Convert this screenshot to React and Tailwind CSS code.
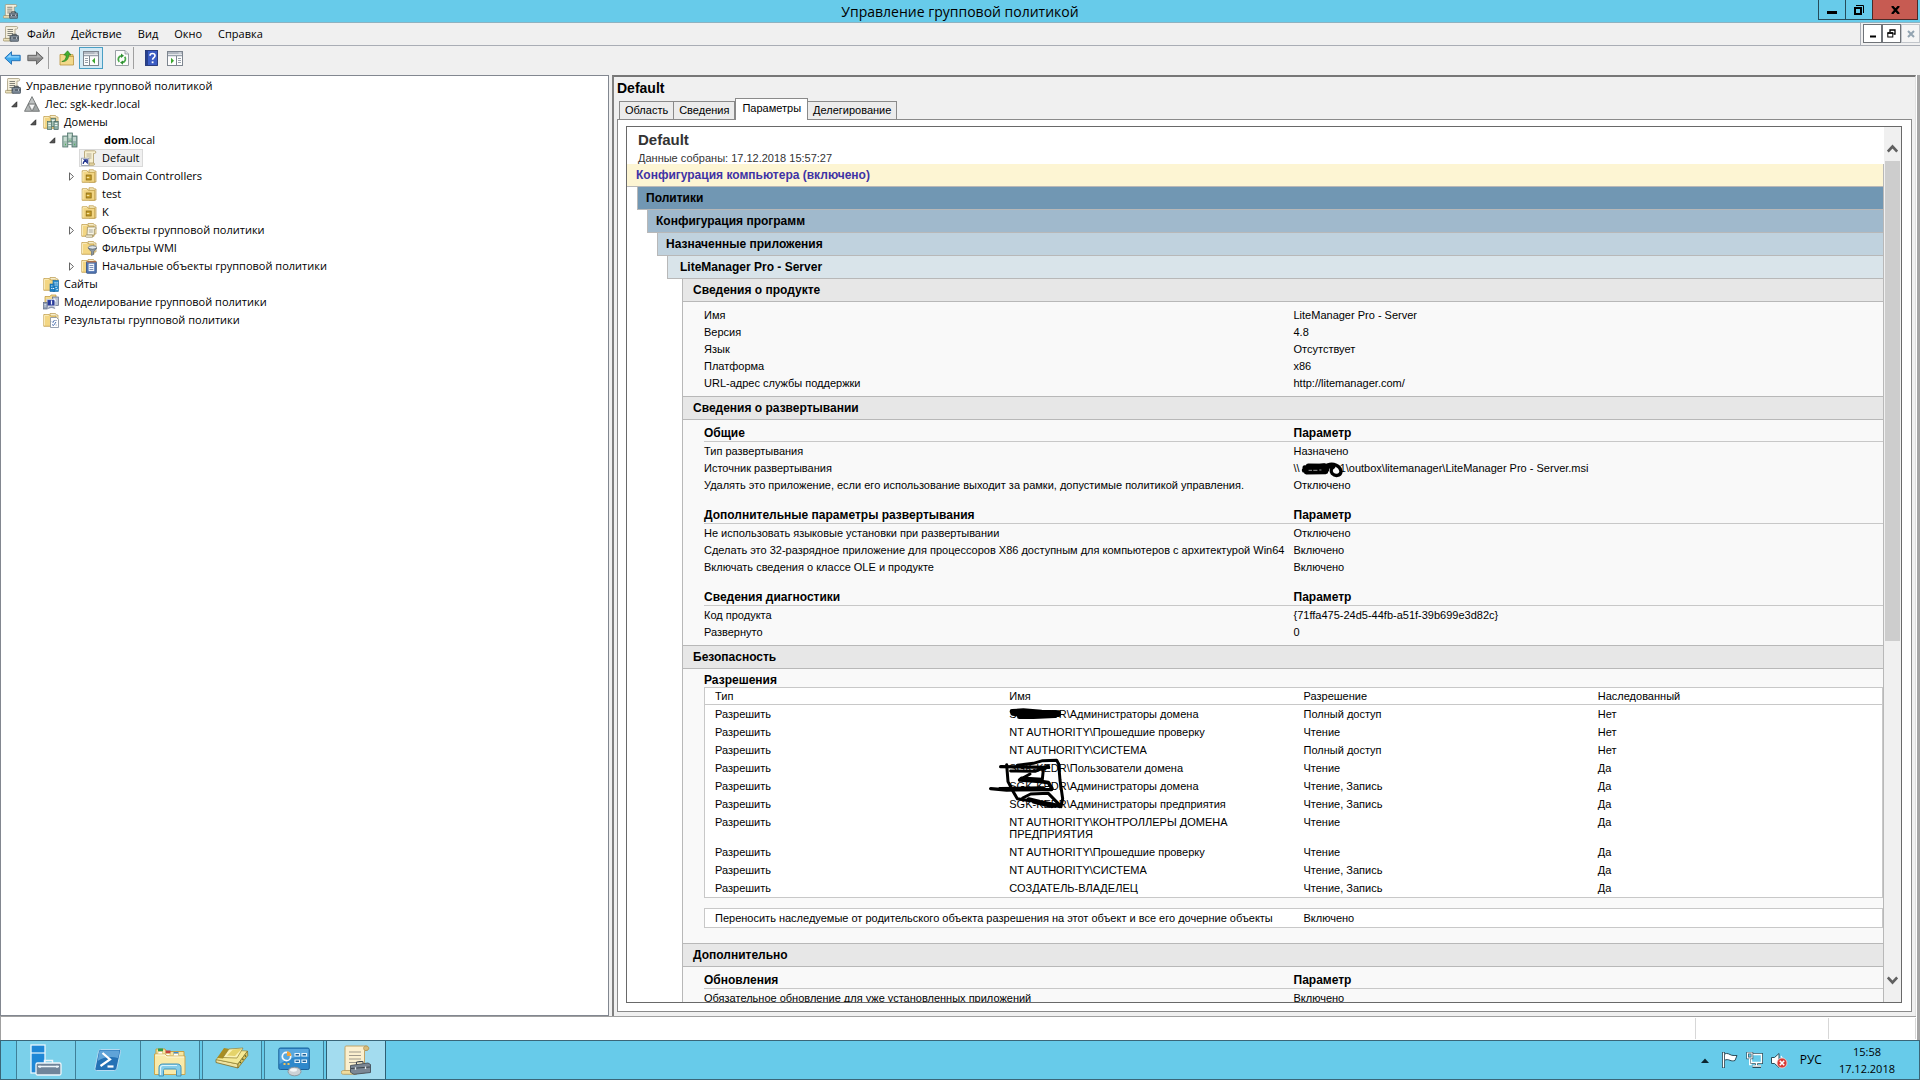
import { Fragment } from 'react';

/* ---------- icons ---------- */

function GpmcIcon({ size = 16 }) {
  return (
    <svg width={size} height={size} viewBox="0 0 16 16" className="shrink-0">
      <path d="M3 .5h10.500c1.600 0 1.600 2.600 0 2.600H12V13H2.500V2.500C2.500 1.200 2.600.5 3 .5z" fill="#f4efdc" stroke="#9c9070" strokeWidth=".7" />
      <path d="M1.200 15c-1.600 0-1.400-2.600 0-2.600H9V15z" fill="#ece2bd" stroke="#94875c" strokeWidth=".7" />
      <path d="M4.500 3.500h5.500M4.500 5.500h5.500M4.500 7.500h5.500M4.500 9.500h3" stroke="#77776f" strokeWidth=".9" />
      <rect x="7" y="9.500" width="8.600" height="5.800" rx=".7" fill="#7d8a97" stroke="#434e58" strokeWidth=".8" />
      <path d="M9.300 9.500V8.300h4v1.200M7 12h8.600" stroke="#333d46" strokeWidth=".9" fill="none" />
      <path d="M9 11.300v1.500M13.500 11.300v1.500" stroke="#e4e9ee" strokeWidth=".9" />
    </svg>
  );
}

function ForestIcon() {
  return (
    <svg width="16" height="16" viewBox="0 0 16 16" className="shrink-0">
      <path d="M8 .6 4.200 8h7.600z" fill="#bfc2c2" stroke="#646868" strokeWidth=".8" />
      <path d="M4.200 8 .5 15.300h7.300z" fill="#b2b6b6" stroke="#646868" strokeWidth=".8" />
      <path d="M11.800 8 8.200 15.300h7.300z" fill="#9fa4a4" stroke="#646868" strokeWidth=".8" />
      <path d="M4.800 8.400h6.400L8 14.600z" fill="#f6f7f7" stroke="#7e8282" strokeWidth=".6" />
    </svg>
  );
}

function FolderBase() {
  return (
    <>
      <path d="M7 1.500h5.500l1 1.500H15v9H7z" fill="#f7eecb" stroke="#b9984a" strokeWidth=".7" />
      <path d="M.8 2.500h5.500L7.600 4H13v10.300H.8z" fill="#f3d683" stroke="#b9923a" strokeWidth=".7" />
      <path d="M1.500 3.300h4.300M1.500 3.300v10.200" stroke="#fdf3cd" strokeWidth=".8" fill="none" />
    </>
  );
}

function Servers({ x = 0, y = 0 }) {
  return (
    <g>
      <rect x={x + 3.500} y={y} width="4.500" height="8" fill="#a9c6b8" stroke="#4a6d66" strokeWidth=".7" />
      <rect x={x} y={y + 3} width="4.200" height="8" fill="#9dbcae" stroke="#4a6d66" strokeWidth=".7" />
      <rect x={x + 6.500} y={y + 3} width="4.200" height="8" fill="#8fb1a8" stroke="#42625d" strokeWidth=".7" />
      <path d={`M${x + 4.500} ${y + 2}h2.500M${x + 0.800} ${y + 5}h2.600M${x + 0.800} ${y + 7}h2.600M${x + 7.300} ${y + 5}h2.600M${x + 7.300} ${y + 7}h2.600`} stroke="#f1f7f4" strokeWidth=".9" />
    </g>
  );
}

function DomainsIcon() {
  return (
    <svg width="16" height="16" viewBox="0 0 16 16" className="shrink-0">
      <FolderBase />
      <Servers x={4.500} y={4.500} />
    </svg>
  );
}

function DomainIcon() {
  return (
    <svg width="16" height="16" viewBox="0 0 16 16" className="shrink-0">
      <rect x="5.500" y="1" width="5" height="9" fill="#a9c6b8" stroke="#54766f" strokeWidth=".8" />
      <rect x=".8" y="4" width="5" height="11" fill="#a3c1b3" stroke="#54766f" strokeWidth=".8" />
      <rect x="10" y="4" width="5" height="11" fill="#93b3aa" stroke="#4b6b66" strokeWidth=".8" />
      <path d="M6.500 3h3M6.500 5h3M1.800 6h3M1.800 8h3M11 6h3M11 8h3" stroke="#eff6f2" />
      <path d="M3 12.500h.8M12.300 12.500h.8M7.600 8.500h.8" stroke="#3faa48" strokeWidth="1.300" />
      <path d="M6 12.500h4" stroke="#7b9b94" strokeWidth="1.200" />
    </svg>
  );
}

function GpoLinkIcon() {
  return (
    <svg width="16" height="16" viewBox="0 0 16 16" className="shrink-0">
      <path d="M4 .8h9.500c1.800 0 1.800 2.700 0 2.700h-1V13.500H3.500V3C3.500 1.500 3.400.8 4 .8z" fill="#f7efd0" stroke="#ad9a68" strokeWidth=".8" />
      <path d="M8 15.300h4.500c1.400 0 1.400-2.300 0-2.300H8z" fill="#eadba6" stroke="#a08d58" strokeWidth=".7" />
      <path d="M5.500 4h5M5.500 6h5M8 8h2.500" stroke="#a39d88" strokeWidth=".8" />
      <rect x=".6" y="8.200" width="7.200" height="7.200" fill="#fff" stroke="#8b93a6" strokeWidth=".8" />
      <path d="M2.200 13.900c0-2 .9-2.800 2.500-2.800M3.300 9.900h3v3z" stroke="#1d2f8c" strokeWidth="1.100" fill="#1d2f8c" fillOpacity=".4" />
    </svg>
  );
}

function OuIcon() {
  return (
    <svg width="16" height="16" viewBox="0 0 16 16" className="shrink-0">
      <path d="M8 1.800h4.500l.8 1.200H15v11H8z" fill="#f8ecc0" stroke="#b9923a" strokeWidth=".7" />
      <path d="M1.200 2.800h5L7.400 4.300H13.800v10H1.200z" fill="#f2d583" stroke="#b9953f" strokeWidth=".8" />
      <path d="M1.900 3.600h4M1.900 3.600v10" stroke="#fdf2c6" strokeWidth=".8" />
      <rect x="5.200" y="7" width="5" height="5" fill="#c39a26" stroke="#8a6b14" strokeWidth=".8" />
      <path d="M5.800 9.500h2.500" stroke="#f7e39c" strokeWidth="1.200" />
    </svg>
  );
}

function GpoFolderIcon() {
  return (
    <svg width="16" height="16" viewBox="0 0 16 16" className="shrink-0">
      <FolderBase />
      <path d="M6.500 5h7.500c1.500 0 1.500 2.200 0 2.200h-.7V13H6z" fill="#fbf7e6" stroke="#9c8f68" strokeWidth=".8" />
      <path d="M5.500 15.300c-1.300 0-1.300-2.300 0-2.300h6v2.300z" fill="#f2ead0" stroke="#9c8f68" strokeWidth=".7" />
      <path d="M7.800 8h4M7.800 10h4" stroke="#9a9a92" strokeWidth=".9" />
    </svg>
  );
}

function WmiIcon() {
  return (
    <svg width="16" height="16" viewBox="0 0 16 16" className="shrink-0">
      <FolderBase />
      <ellipse cx="11.500" cy="7.500" rx="4.200" ry="1.800" fill="#dfe6ec" stroke="#66727d" strokeWidth=".8" />
      <path d="M7.300 8c.6 2 2.900 2.800 3.200 3.700v3.800l2-1.200v-2.600c.3-.9 2.600-1.700 3.200-3.700-1.500 1.700-6.900 1.700-8.400 0z" fill="#8b98a5" stroke="#56626e" strokeWidth=".6" />
    </svg>
  );
}

function StarterIcon() {
  return (
    <svg width="16" height="16" viewBox="0 0 16 16" className="shrink-0">
      <FolderBase />
      <rect x="5.500" y="3.500" width="9.800" height="11.800" rx=".8" fill="#5377b4" stroke="#2f4c82" strokeWidth=".8" />
      <rect x="7.600" y="5.700" width="5.600" height="7.400" fill="#f0f4fa" />
      <path d="M6 3.800h9" stroke="#c8743a" strokeWidth="1.200" />
      <path d="M8.500 7.500h3.800M8.500 9.500h3.800M8.500 11.500h3.800" stroke="#6f86ae" strokeWidth=".9" />
    </svg>
  );
}

function SitesIcon() {
  return (
    <svg width="16" height="16" viewBox="0 0 16 16" className="shrink-0">
      <FolderBase />
      <rect x="10" y="4.500" width="5.500" height="11" fill="#2c8fd0" stroke="#17669e" strokeWidth=".6" />
      <rect x="7" y="8" width="4.800" height="7.500" fill="#1f7fc2" stroke="#17669e" strokeWidth=".6" />
      <path d="M11.500 6.800h1.200M13.500 6.800h1.200M11.500 9h1.200M13.500 9h1.200M8.200 10h1.200M12.500 11.500h1.200M8.200 12.500h1.200M10 12.500h1.200M13.500 13.500h1.200" stroke="#e6f4fd" strokeWidth="1.200" />
    </svg>
  );
}

function ModelingIcon() {
  return (
    <svg width="16" height="16" viewBox="0 0 16 16" className="shrink-0">
      <path d="M2 2.500h5L8 1h5v8H2z" fill="#f5dc90" stroke="#b9923a" strokeWidth=".7" />
      <rect x="9.500" y="3" width="6" height="8.500" fill="#b9c3d4" stroke="#5d6984" strokeWidth=".7" />
      <rect x="4" y="5.500" width="8" height="6.500" fill="#2a3c9c" stroke="#c5cbdb" strokeWidth="1.100" />
      <path d="M8.500 6.500v4M11 4.500l2 3" stroke="#eef1ff" strokeWidth="1.200" />
      <rect x=".6" y="8.500" width="3.600" height="6.500" fill="#93a2b8" stroke="#5d6984" strokeWidth=".7" />
      <path d="M5 14.500c2-1.500 5-1.500 7 0" stroke="#8d97ad" strokeWidth="1.500" fill="none" />
      <path d="M1.300 10.500h2M1.300 12h2" stroke="#edf2f8" strokeWidth=".7" />
    </svg>
  );
}

function ResultsIcon() {
  return (
    <svg width="16" height="16" viewBox="0 0 16 16" className="shrink-0">
      <FolderBase />
      <path d="M7.500 5.500h6l2 2v8h-8z" fill="#fff" stroke="#7f8ba0" strokeWidth=".8" />
      <path d="M9 9.500l1 1 1.500-2.500M9 12.500l1.500 1 2.500-3.500" stroke="#3a62a8" strokeWidth=".9" fill="none" />
      <path d="M12 8.500h2M12.500 13h1.500" stroke="#9aa5b5" strokeWidth=".8" />
    </svg>
  );
}

function ArrowLeftIcon() {
  return (
    <svg width="17" height="16" viewBox="0 0 17 16">
      <path d="M.8 8 7.500 1.700v3.600h8.700v5.400H7.500v3.600z" fill="#3fa9ec" stroke="#1f6cb3" strokeWidth=".9" />
      <path d="M2.800 7.500 6.800 3.700v2.500h8.400v1.300z" fill="#93d3fa" />
    </svg>
  );
}

function ArrowRightIcon() {
  return (
    <svg width="17" height="16" viewBox="0 0 17 16">
      <path d="M16.200 8 9.500 1.700v3.600H.8v5.400h8.700v3.600z" fill="#8b8b8b" stroke="#5e5e5e" strokeWidth=".9" />
      <path d="M14.200 7.500 10.200 3.700v2.500H1.800v1.300z" fill="#b3b3b3" />
    </svg>
  );
}

function FolderUpIcon() {
  return (
    <svg width="16" height="16" viewBox="0 0 16 16">
      <path d="M1 4.500h4.500L7 6h7.500v9H1z" fill="#f3d98b" stroke="#b9923a" strokeWidth=".8" />
      <path d="M10 4.500h4v2h-4z" fill="#e9c96d" stroke="#b9923a" strokeWidth=".6" />
      <path d="M2.800 11.500C5.800 10.800 7.200 8.500 7.200 5H4.800L8.600.8 12 5H9.700c0 4.300-2.700 7-6.900 6.500z" fill="#43ae2f" stroke="#25781a" strokeWidth=".6" />
    </svg>
  );
}

function TreeToggleIcon({ flip }) {
  return (
    <svg width="16" height="15" viewBox="0 0 16 15">
      <rect x=".5" y=".5" width="15" height="14" fill="#fdfdfd" stroke="#7d858f" />
      <path d="M1 2h14M1 4.500h14" stroke="#9aa3ae" strokeWidth="1.400" />
      <path d="M11.500 2h2.500" stroke="#e9edf2" strokeWidth=".9" />
      {flip ? (
        <>
          <path d="M9.500 5v9" stroke="#7d858f" />
          <path d="M11 7.500h3M11 9.500h3M11 11.500h3" stroke="#8c96a3" strokeWidth=".9" />
          <path d="M4 6.800v6L7 9.800z" fill="#3aa62e" />
        </>
      ) : (
        <>
          <path d="M6.500 5v9" stroke="#7d858f" />
          <path d="M2 7.500h3M2 9.500h3M2 11.500h3" stroke="#8c96a3" strokeWidth=".9" />
          <path d="M12 6.800v6L9 9.800z" fill="#3aa62e" />
        </>
      )}
    </svg>
  );
}

function RefreshIcon() {
  return (
    <svg width="14" height="16" viewBox="0 0 14 16">
      <path d="M.5.5h9.500l3.500 3.500v11.500H.5z" fill="#fcfcfc" stroke="#8f959c" strokeWidth=".9" />
      <path d="M10 .5V4h3.500" fill="#dfe3e8" stroke="#8f959c" strokeWidth=".8" />
      <path d="M4.300 11.800A3.500 3.500 0 0 1 6.500 5.800" fill="none" stroke="#45a845" strokeWidth="1.800" />
      <path d="M9.700 6.800A3.500 3.500 0 0 1 7.500 12.500" fill="none" stroke="#45a845" strokeWidth="1.800" />
      <path d="M6 3.600v4.300l3-2.200z" fill="#2f8f33" />
      <path d="M8 10.400v4.300l-3-2.200z" fill="#2f8f33" />
    </svg>
  );
}

function HelpIcon() {
  return (
    <svg width="13" height="16" viewBox="0 0 13 16">
      <rect x=".5" y=".5" width="12" height="15" fill="#3b5cc4" stroke="#1f3274" strokeWidth=".9" />
      <path d="M1 1h2v14H1z" fill="#27418f" />
      <path d="M5 5.700C5 2.800 10 2.800 10 5.700c0 2-2.400 1.900-2.400 4.100" fill="none" stroke="#fff" strokeWidth="1.600" />
      <rect x="6.700" y="11.400" width="1.800" height="1.800" fill="#fff" />
    </svg>
  );
}

function ServerManagerIcon() {
  return (
    <svg width="32" height="32" viewBox="0 0 32 32">
      <rect x="1" y="1" width="14" height="28" fill="#1f87d6" stroke="#e9f6fd" strokeWidth="1.300" />
      <path d="M1 9h14" stroke="#e9f6fd" strokeWidth="1.200" />
      <rect x="6" y="19" width="25" height="12" rx="1.500" fill="#70859a" stroke="#eef6fb" strokeWidth="1.300" />
      <path d="M14.500 19v-2.500h8V19" fill="none" stroke="#eef6fb" strokeWidth="1.400" />
      <path d="M8 22.500h21M10 21.500v2.500M27 21.500v2.500" stroke="#eef6fb" strokeWidth="1.300" />
    </svg>
  );
}

function PowerShellIcon() {
  return (
    <svg width="28" height="24" viewBox="0 0 28 24">
      <path d="M6.500 1.500h18.500c1.300 0 1.800.9 1.500 2.200l-3.600 16.500c-.3 1.300-1.300 2.300-2.600 2.300H2.500c-1.300 0-1.800-.9-1.500-2.200L4.400 3.700C4.700 2.400 5.300 1.500 6.500 1.500z" fill="#2471b5" stroke="#b5dbf2" />
      <path d="M6.500 2.500h18c1 0 1 .7.900 1.400L24 10C17 8 9 9 3.700 13L5.200 4c.2-.9.500-1.500 1.300-1.500z" fill="#5fa3d8" />
      <path d="M8.500 5l7.500 6.500L6.500 18" fill="none" stroke="#fff" strokeWidth="2.200" />
      <path d="M13.500 18.500h6" stroke="#fff" strokeWidth="2.200" />
    </svg>
  );
}

function ExplorerIcon() {
  return (
    <svg width="34" height="30" viewBox="0 0 34 30">
      <path d="M3 2h9l1.500 2.500H31V27H3z" fill="#f6e6a0" stroke="#c49f45" />
      <path d="M5 1.500h5v3H5z" fill="#2f9c46" />
      <path d="M12.500 3.500h5v3h-5z" fill="#c5443a" />
      <path d="M20.500 5h5v3h-5z" fill="#3b8bd0" />
      <path d="M1.500 7h11l1.500 2h18v18.500H1.500z" fill="#f9eaa9" stroke="#c9a650" />
      <path d="M5 6.500V4.500h4.500v2M13 8V6.500h4V8M20.500 8.500v-2h5v2" fill="#fff" stroke="#c9a650" strokeWidth=".5" />
      <path d="M2.500 8h9.500l1.500 2H31" stroke="#fffbe2" fill="none" />
      <path d="M6 29V20.500c0-2 1.500-3.500 3.500-3.500h15c2 0 3.500 1.500 3.500 3.500V29h-4.500v-5.500c0-1-.5-1.500-1.500-1.500H12c-1 0-1.500.5-1.500 1.500V29z" fill="#86cde9" stroke="#4593b8" />
      <path d="M7.500 28v-7c0-1.500 1-2.500 2.500-2.500h14" stroke="#dcf3fb" strokeWidth="1.200" fill="none" />
    </svg>
  );
}

function ManagerIcon() {
  return (
    <svg width="34" height="22" viewBox="0 0 34 22">
      <path d="M1 12.500 23 17v4L1 15.500z" fill="#efe3a0" stroke="#7c6a22" strokeWidth=".8" />
      <path d="M1 12.500 11 3l21.500 1L23 17z" fill="#f4e996" stroke="#9a8634" strokeWidth=".7" />
      <path d="M2 11 9 1l6 1-7 9.500z" fill="#a88d22" />
      <path d="M8 10.500 14 2l14-1-6 10z" fill="#faf2b4" stroke="#8f7c2e" strokeWidth=".7" />
      <path d="M12 8.500 18 2.500l9-.8L20 9z" fill="#e5d36a" />
      <path d="M23 17v4L32.800 8.500 32.500 4z" fill="#d9c560" stroke="#7c6a22" strokeWidth=".7" />
      <path d="M25 16l.8-1M27.500 12.800l.8-1M30 9.500l.8-1" stroke="#4b5b2a" strokeWidth="1.500" />
    </svg>
  );
}

function ControlPanelIcon() {
  return (
    <svg width="32" height="30" viewBox="0 0 32 30">
      <rect x=".8" y="1" width="30.500" height="21.500" rx="1.500" fill="#2e88cb" stroke="#1b629b" />
      <path d="M1.500 2h29v8C20 8 10 11 1.500 17z" fill="#58a8df" />
      <circle cx="8.500" cy="9.500" r="4.200" fill="none" stroke="#f3f9fd" strokeWidth="1.700" />
      <path d="M9 9V4.300a4.800 4.800 0 0 1 4.300 4.700z" fill="#f1a33c" />
      <path d="M17 6.500h4.500v2.500H17zM24 6.500h4.500v2.500H24zM17 13h4.500v2.500H17zM24 13h4.500v2.500H24z" fill="#1c5f98" stroke="#e4f3fc" strokeWidth="1.100" />
      <path d="M5.500 17h2M9.500 17h2" stroke="#f4c257" strokeWidth="2" />
      <ellipse cx="16.500" cy="24.500" rx="6.500" ry="4.300" fill="#cdd2d6" stroke="#8c9297" strokeWidth=".9" />
      <ellipse cx="15.500" cy="23" rx="3.500" ry="1.700" fill="#f4f6f7" />
    </svg>
  );
}

function GpmcLargeIcon() {
  return (
    <svg width="30" height="30" viewBox="0 0 30 30">
      <path d="M5 1h20c3.500 0 3.500 4.500 0 4.500h-1.500V28H4V4C4 2 4 1 5 1z" fill="#fbf0cf" stroke="#bfa468" />
      <path d="M24 5.500c-2-1-2-4.500 1-4.500 3.800 0 3.600 4.500 0 4.500z" fill="#d8bd7c" stroke="#a98e50" strokeWidth=".7" />
      <path d="M2.500 29.300c-3 0-3-3.800 0-3.800h13v3.800z" fill="#f0dc9d" stroke="#b2975a" strokeWidth=".8" />
      <path d="M8 7h12M8 10.500h12M8 14h12M8 17.500h7" stroke="#a09a8c" strokeWidth="1.100" />
      <path d="M9.500 20.500 27 18l2.500 1.500v8L13 29.300l-3.500-2z" fill="#7b8794" stroke="#454f59" strokeWidth=".9" />
      <path d="M15.500 19.500v-2c0-1 6.500-1.500 6.500-.5v1.500M10 23.500l19-1.500" fill="none" stroke="#3c444c" strokeWidth="1.100" />
      <path d="M14.500 22.300v2.500M24.500 21.500v2.500" stroke="#e5eaee" strokeWidth="1.300" />
    </svg>
  );
}

/* ---------- data ---------- */

const tree = [
  { level: 0, icon: <GpmcIcon />, text: 'Управление групповой политикой' },
  { level: 1, state: 'open', icon: <ForestIcon />, text: 'Лес: sgk-kedr.local' },
  { level: 2, state: 'open', icon: <DomainsIcon />, text: 'Домены' },
  { level: 3, state: 'open', icon: <DomainIcon />, text: <span className="pl-[21px]"><b>dom</b>.local</span> },
  { level: 4, icon: <GpoLinkIcon />, text: 'Default', selected: true },
  { level: 4, state: 'closed', icon: <OuIcon />, text: 'Domain Controllers' },
  { level: 4, icon: <OuIcon />, text: 'test' },
  { level: 4, icon: <OuIcon />, text: 'K' },
  { level: 4, state: 'closed', icon: <GpoFolderIcon />, text: 'Объекты групповой политики' },
  { level: 4, icon: <WmiIcon />, text: 'Фильтры WMI' },
  { level: 4, state: 'closed', icon: <StarterIcon />, text: 'Начальные объекты групповой политики' },
  { level: 2, icon: <SitesIcon />, text: 'Сайты' },
  { level: 2, icon: <ModelingIcon />, text: 'Моделирование групповой политики' },
  { level: 2, icon: <ResultsIcon />, text: 'Результаты групповой политики' },
];

const indents = ['', '', 'pl-[19px]', 'pl-[38px]', 'pl-[57px]'];

const product = [
  ['Имя', 'LiteManager Pro - Server'],
  ['Версия', '4.8'],
  ['Язык', 'Отсутствует'],
  ['Платформа', 'x86'],
  ['URL-адрес службы поддержки', 'http://litemanager.com/'],
];

const deployment = [
  {
    title: 'Общие',
    rows: [
      ['Тип развертывания', 'Назначено'],
      ['Источник развертывания', <SourcePath key="p" />],
      ['Удалять это приложение, если его использование выходит за рамки, допустимые политикой управления.', 'Отключено'],
    ],
  },
  {
    title: 'Дополнительные параметры развертывания',
    rows: [
      ['Не использовать языковые установки при развертывании', 'Отключено'],
      ['Сделать это 32-разрядное приложение для процессоров X86 доступным для компьютеров с архитектурой Win64', 'Включено'],
      ['Включать сведения о классе OLE и продукте', 'Включено'],
    ],
  },
  {
    title: 'Сведения диагностики',
    rows: [
      ['Код продукта', '{71ffa475-24d5-44fb-a51f-39b699e3d82c}'],
      ['Развернуто', '0'],
    ],
  },
];

const permissions = [
  ['SGK-KEDR\\Администраторы домена', 'Полный доступ', 'Нет'],
  ['NT AUTHORITY\\Прошедшие проверку', 'Чтение', 'Нет'],
  ['NT AUTHORITY\\СИСТЕМА', 'Полный доступ', 'Нет'],
  ['SGK-KEDR\\Пользователи домена', 'Чтение', 'Да'],
  ['SGK-KEDR\\Администраторы домена', 'Чтение, Запись', 'Да'],
  ['SGK-KEDR\\Администраторы предприятия', 'Чтение, Запись', 'Да'],
  [<Fragment key="k">NT AUTHORITY\КОНТРОЛЛЕРЫ ДОМЕНА<br />ПРЕДПРИЯТИЯ</Fragment>, 'Чтение', 'Да'],
  ['NT AUTHORITY\\Прошедшие проверку', 'Чтение', 'Да'],
  ['NT AUTHORITY\\СИСТЕМА', 'Чтение, Запись', 'Да'],
  ['СОЗДАТЕЛЬ-ВЛАДЕЛЕЦ', 'Чтение, Запись', 'Да'],
];

/* ---------- pen marks over private names ---------- */

function SourcePath() {
  return (
    <span className="relative">
      {'\\\\'}
      <span className="inline-block w-[40px]" />
      {'1\\outbox\\litemanager\\LiteManager Pro - Server.msi'}
      <svg width="120" height="60" viewBox="0 0 360 180" className="pointer-events-none absolute -top-[21px] -left-[9px]" fill="none" stroke="#000" strokeLinecap="round" strokeLinejoin="round">
        <path d="M60 80 L118 74 M58 88 L125 86 M64 93 L122 92 M70 75 L140 76" strokeWidth="15" />
        <path d="M128 72 C145 66 166 74 168 92 C166 106 150 106 142 98 C136 90 138 82 146 78" strokeWidth="10" />
        <path d="M72 88h8M86 88h10M104 87h4" stroke="#ddd" strokeWidth="2" />
      </svg>
    </span>
  );
}

function NamesScribble() {
  return (
    <svg width="140" height="120" viewBox="0 0 420 360" className="pointer-events-none absolute -top-[5px] -left-[19px]" fill="none" stroke="#000" strokeLinecap="round" strokeLinejoin="round">
      <path d="M96 34 L130 32 L185 36 L236 38 M98 40 L140 46 L190 42 L236 44 M118 50 L160 50 L225 47" strokeWidth="14" />
      <path d="M62 200 L206 202" strokeWidth="10" />
      <path d="M92 213 L165 214 L205 198" strokeWidth="9" />
      <path d="M112 196 L160 190 L188 182 L230 181 L236 192 L240 240 L248 296 L243 320" strokeWidth="9" />
      <path d="M80 194 L84 245 L98 272 L112 296 L150 302" strokeWidth="9" />
      <path d="M205 200 L190 208 L187 238 L124 234 L118 240 L150 222" strokeWidth="9" />
      <path d="M120 240 L180 244 L205 248 L216 266" strokeWidth="11" />
      <path d="M32 266 L80 270 L214 269 M60 266 L190 264" strokeWidth="10" />
      <path d="M128 294 L152 282 L205 280 L240 316" strokeWidth="9" />
      <path d="M146 298 L180 306 L238 318 M160 304 L215 318" strokeWidth="13" />
    </svg>
  );
}

/* ---------- report parts ---------- */

function Section({ title, children }) {
  return (
    <section className="ml-[55px] border-x border-[#b8b8b8] bg-[#f9f9f9]">
      <h3 className="border-b border-[#b8b8b8] bg-[#e7e7e7] pl-[10px] text-xs leading-[22px] font-bold">{title}</h3>
      {children}
    </section>
  );
}

function PairTable({ title, rows }) {
  return (
    <table className="w-full table-fixed border-separate border-spacing-0">
      {title && (
        <thead>
          <tr>
            <th className="border-b border-[#c8c8c8] p-0 text-left text-xs leading-4 font-bold">{title}</th>
            <th className="border-b border-[#c8c8c8] p-0 text-left text-xs leading-4 font-bold">Параметр</th>
          </tr>
        </thead>
      )}
      <tbody>
        {rows.map(([a, b]) => (
          <tr key={a}>
            <td className="px-0 pt-px pb-0 leading-4 whitespace-nowrap">{a}</td>
            <td className="px-0 pt-px pb-0 leading-4 whitespace-nowrap">{b}</td>
          </tr>
        ))}
      </tbody>
    </table>
  );
}

function Report() {
  return (
    <div className="min-w-0 flex-1 overflow-hidden">
      <div className="pt-1 pl-[11px] text-[#333]">
        <h2 className="text-[15px] leading-[18px] font-bold">Default</h2>
        <p className="h-[15px] leading-[18px]">Данные собраны: 17.12.2018 15:57:27</p>
      </div>
      <div className="relative border-r border-b border-[#b8b8b8] bg-[#fdf5d3] pl-[9px] text-xs leading-[22px] font-bold text-[#3f33a5]">Конфигурация компьютера (включено)</div>
      <div className="ml-[10px] border-x border-b border-[#b8b8b8] bg-[#7197b3] pl-2 text-xs leading-[22px] font-bold">Политики</div>
      <div className="ml-[20px] border-x border-b border-[#b8b8b8] bg-[#a0b9cc] pl-2 text-xs leading-[22px] font-bold">Конфигурация программ</div>
      <div className="ml-[30px] border-x border-b border-[#b8b8b8] bg-[#c0d2de] pl-2 text-xs leading-[22px] font-bold">Назначенные приложения</div>
      <div className="ml-[40px] border-x border-b border-[#b8b8b8] bg-[#d9e4ea] pl-3 text-xs leading-[22px] font-bold">LiteManager Pro - Server</div>

      <Section title="Сведения о продукте">
        <div className="border-b border-[#b8b8b8] pt-1 pb-[5px] pl-[21px]">
          <PairTable rows={product} />
        </div>
      </Section>
      <Section title="Сведения о развертывании">
        <div className="flex flex-col gap-[14px] border-b border-[#b8b8b8] pt-[5px] pb-[5px] pl-[21px]">
          {deployment.map((g) => (
            <PairTable key={g.title} title={g.title} rows={g.rows} />
          ))}
        </div>
      </Section>
      <Section title="Безопасность">
        <div className="border-b border-[#b8b8b8] pt-1 pb-[15px] pl-[21px]">
          <h4 className="text-xs leading-[14px] font-bold">Разрешения</h4>
          <table className="w-full table-fixed border-separate border-spacing-0 border border-[#c8c8c8] bg-white">
            <thead>
              <tr>
                {['Тип', 'Имя', 'Разрешение', 'Наследованный'].map((h) => (
                  <th key={h} className="border-b border-[#c8c8c8] py-0 pr-0 pl-[10px] text-left leading-4 font-normal">{h}</th>
                ))}
              </tr>
            </thead>
            <tbody>
              {permissions.map(([name, right, inherited], i) => (
                <tr key={i}>
                  <td className="py-[3px] pr-0 pl-[10px] align-top leading-3">Разрешить</td>
                  <td className="relative py-[3px] pr-0 pl-[10px] align-top leading-3">
                    {name}
                    {i === 0 && <NamesScribble />}
                  </td>
                  <td className="py-[3px] pr-0 pl-[10px] align-top leading-3">{right}</td>
                  <td className="py-[3px] pr-0 pl-[10px] align-top leading-3">{inherited}</td>
                </tr>
              ))}
            </tbody>
          </table>
          <div className="mt-[10px] grid grid-cols-4 border border-[#c8c8c8] bg-white leading-[18px]">
            <span className="col-span-2 pl-[10px] whitespace-nowrap">Переносить наследуемые от родительского объекта разрешения на этот объект и все его дочерние объекты</span>
            <span className="pl-[10px]">Включено</span>
          </div>
        </div>
      </Section>
      <Section title="Дополнительно">
        <div className="pt-[5px] pl-[21px]">
          <PairTable title="Обновления" rows={[['Обязательное обновление для уже установленных приложений', 'Включено']]} />
        </div>
      </Section>
    </div>
  );
}

/* ---------- window ---------- */

function Tab({ active, children }) {
  return active ? (
    <button className="relative -mb-px h-[22px] border border-b-0 border-[#8a8a8a] bg-white px-[6px] pb-[3px]">{children}</button>
  ) : (
    <button className="-ml-px h-[18px] border border-b-0 border-[#8a8a8a] bg-[#ececec] px-[5px]">{children}</button>
  );
}

function TreeRow({ item }) {
  return (
    <li className={`flex h-[18px] items-center ${indents[item.level]}`}>
      {item.level > 0 && (
        <span className="flex h-full w-[19px] shrink-0 items-center pl-2">
          {item.state === 'open' && (
            <svg width="7" height="7" viewBox="0 0 7 7"><path d="M5.800.8v5H.8z" fill="#555" stroke="#222" strokeWidth=".8" /></svg>
          )}
          {item.state === 'closed' && (
            <svg width="7" height="9" viewBox="0 0 7 9"><path d="M1.500.8v7.400L5.500 4.500z" fill="#fff" stroke="#666" /></svg>
          )}
        </span>
      )}
      <button className={`flex h-[18px] items-center gap-[5px] border pr-[3px] pl-px whitespace-nowrap ${item.selected ? 'border-[#d9d9d9] bg-[#f0f0f0]' : 'border-transparent'}`}>
        {item.icon}
        <span>{item.text}</span>
      </button>
    </li>
  );
}

export default function App() {
  return (
    <div className="flex h-screen flex-col overflow-hidden bg-[#f0f0f0] font-['Open_Sans',sans-serif] text-[11px] text-black">
      <header className="grid h-[23px] shrink-0 grid-cols-[1fr_auto_1fr] items-start border-b border-[#8fb2c0] bg-[#67cbea]">
        <div className="pt-1 pl-[3px]"><GpmcIcon size={15} /></div>
        <h1 className="text-sm leading-[23px]">Управление групповой политикой</h1>
        <div className="flex justify-end pr-[2px]">
          <button aria-label="Свернуть" className="flex h-5 w-[28px] items-center justify-center border-x border-b border-[#264c5a]">
            <svg width="10" height="10" viewBox="0 0 10 10"><path d="M0 7.500h10" stroke="#000" strokeWidth="3" /></svg>
          </button>
          <button aria-label="Развернуть" className="flex h-5 w-[26px] items-center justify-center border-b border-[#264c5a]">
            <svg width="10" height="10" viewBox="0 0 10 10" fill="none" stroke="#000"><path d="M2 .5h7.500V8" /><rect x="1" y="3" width="6" height="6" strokeWidth="2" /></svg>
          </button>
          <button aria-label="Закрыть" className="flex h-5 w-[46px] items-center justify-center border-x border-b border-[#4b2a28] bg-[#c75b52]">
            <svg width="9" height="8" viewBox="0 0 9 8"><path d="M1 0l7 8M8 0 1 8" stroke="#000" strokeWidth="2.300" /></svg>
          </button>
        </div>
      </header>

      <nav className="flex h-[23px] shrink-0 border-b border-[#a9adb5]">
        <div className="flex items-center pr-px pl-[3px]"><GpmcIcon size={16} /></div>
        <div className="flex flex-1 items-center">
          {['Файл', 'Действие', 'Вид', 'Окно', 'Справка'].map((m) => (
            <button key={m} className="pr-[9px] pl-[7px]">{m}</button>
          ))}
        </div>
        <div className="flex items-start border-l border-[#a9adb5] pt-px pl-[2px]">
          <button aria-label="Свернуть окно" className="flex h-[19px] w-[19px] items-center justify-center border border-[#6f7378] bg-white">
            <svg width="9" height="9" viewBox="0 0 9 9"><path d="M2 7.500h6" stroke="#000" strokeWidth="2" /></svg>
          </button>
          <button aria-label="Восстановить окно" className="flex h-[19px] w-[19px] items-center justify-center border border-[#6f7378] bg-white">
            <svg width="9" height="9" viewBox="0 0 9 9" fill="none" stroke="#000"><path d="M3 3V1h5v4H6.500" strokeWidth="1.300" /><rect x=".8" y="4" width="5" height="4" /><path d="M.5 4h5.700" strokeWidth="1.600" /></svg>
          </button>
          <button aria-label="Закрыть окно" className="flex h-[19px] w-[19px] items-center justify-center border border-[#c2c6cb] bg-[#f5f5f5]">
            <svg width="8" height="8" viewBox="0 0 8 8"><path d="M1 1l6 6M7 1 1 7" stroke="#93a4b1" strokeWidth="2" /></svg>
          </button>
        </div>
      </nav>

      <div className="flex h-[29px] shrink-0 items-start">
        <div className="flex h-6 items-center">
          <button aria-label="Назад" className="ml-[4px]"><ArrowLeftIcon /></button>
          <button aria-label="Вперед" className="ml-[6px]"><ArrowRightIcon /></button>
          <span className="ml-[4px] h-[22px] w-px bg-[#a0a0a0]" />
          <button aria-label="Вверх" className="ml-[10px]"><FolderUpIcon /></button>
          <button aria-label="Дерево консоли" className="ml-[4px] flex h-[22px] w-6 items-center justify-center border border-[#4a9fc4] bg-[#d3e9f4]"><TreeToggleIcon /></button>
          <button aria-label="Обновить" className="ml-3"><RefreshIcon /></button>
          <span className="ml-[4px] h-[22px] w-px bg-[#a0a0a0]" />
          <button aria-label="Справка" className="ml-[11px]"><HelpIcon /></button>
          <button aria-label="Панель действий" className="ml-[9px]"><TreeToggleIcon flip /></button>
        </div>
      </div>

      <div className="flex min-h-0 flex-1">
        <div className="flex min-w-0 flex-1 flex-col">
          <main className="flex min-h-0 flex-1 gap-[3px]">
            <aside className="w-[609px] shrink-0 border border-[#828790] bg-white pt-px pl-[2px]">
              <ul>
                {tree.map((item, i) => (
                  <TreeRow key={i} item={item} />
                ))}
              </ul>
            </aside>

            <section className="flex min-w-0 flex-1 flex-col border-t-2 border-r border-l-2 border-t-[#777] border-r-[#e0e0e0] border-l-[#808080] pr-[3px] pb-1 pl-[3px] font-['Liberation_Sans',Arial,sans-serif]">
              <h2 className="h-[22px] text-sm leading-[22px] font-bold">Default</h2>
              <div className="flex h-5 shrink-0 items-end pl-[3px]">
                <Tab>Область</Tab>
                <Tab>Сведения</Tab>
                <Tab active>Параметры</Tab>
                <Tab>Делегирование</Tab>
              </div>
              <div className="flex min-h-0 flex-1 border border-[#8a8a8a] bg-white pt-[6px] pr-[9px] pb-2 pl-2">
                <div className="flex min-w-0 flex-1 border border-[#696969]">
                  <Report />
                  <div className="flex w-[17px] shrink-0 flex-col items-center bg-[#f0f0f0]">
                    <button aria-label="Прокрутить вверх" className="flex h-[34px] items-end justify-center pb-2">
                      <svg width="11" height="9" viewBox="0 0 11 9"><path d="M.8 7.500l4.700-5 4.700 5" fill="none" stroke="#606060" strokeWidth="2.600" /></svg>
                    </button>
                    <div className="min-h-0 w-full flex-1 pl-px">
                      <div className="h-[59%] w-[15px] bg-[#cdcdcd]" />
                    </div>
                    <button aria-label="Прокрутить вниз" className="flex h-[28px] items-start justify-center pt-[2px]">
                      <svg width="11" height="9" viewBox="0 0 11 9"><path d="M.8 1.500l4.700 5 4.700-5" fill="none" stroke="#606060" strokeWidth="2.600" /></svg>
                    </button>
                  </div>
                </div>
              </div>
            </section>
          </main>

          <footer className="flex h-6 shrink-0 border-t border-l border-[#a0a0a0] bg-white">
            <div className="flex-1" />
            <div className="my-px w-[133px] border-l border-[#d7d7d7]" />
            <div className="my-px w-[88px] border-x border-[#d7d7d7]" />
          </footer>
        </div>
        <div className="w-1 shrink-0 border-l border-white bg-[#a5a5a5]" />
      </div>

      <div className="flex h-10 shrink-0 border border-[#3a6679] bg-[#67cbea]">
        <div className="flex pl-[15px]">
          <button aria-label="Диспетчер серверов" className="flex w-[60px] items-center justify-center border-x border-[#3f7f98] bg-[#7bd0ea]"><ServerManagerIcon /></button>
          <button aria-label="PowerShell" className="flex w-[64px] items-center justify-center bg-[#75ceea]"><PowerShellIcon /></button>
          <button aria-label="Проводник" className="flex w-[60px] items-center justify-center border-x border-[#3f7f98] bg-[#7bd0ea] pt-1"><ExplorerIcon /></button>
          <button aria-label="LiteManager" className="ml-[2px] flex w-[60px] items-center justify-center border-x border-[#3f7f98] bg-[#7bd0ea] pb-1"><ManagerIcon /></button>
          <button aria-label="Панель управления" className="ml-[2px] flex w-[60px] items-center justify-center border-x border-[#3f7f98] bg-[#7bd0ea] pt-1"><ControlPanelIcon /></button>
          <button aria-label="Управление групповой политикой" className="ml-[2px] flex w-[60px] items-center justify-center border-x border-[#2d5f74] bg-[#a3dcef]"><GpmcLargeIcon /></button>
        </div>
        <div className="ml-auto flex items-center pr-[24px]">
          <button aria-label="Скрытые значки"><svg width="8" height="5" viewBox="0 0 8 5"><path d="M0 5 4 .5 8 5z" fill="#0c2530" /></svg></button>
          <button aria-label="Центр поддержки" className="ml-3">
            <svg width="18" height="18" viewBox="0 0 18 18"><path d="M2.500 1v16" stroke="#2b4c5a" strokeWidth="3" /><path d="M3.500 3c3-1.500 5 .5 7 1.200 1.500.5 3.500.3 5.500.3l-2 5c-2 .6-3.500.5-5-.2-2-.8-3.500-1-5.500 0z" fill="#fff" stroke="#2b4c5a" /><path d="M2.500 1.500v15" stroke="#fff" strokeWidth="1.300" /></svg>
          </button>
          <button aria-label="Сеть" className="ml-[7px]">
            <svg width="17" height="16" viewBox="0 0 17 16"><path d="M5.500 2.500h10v8h-10zM10.500 10.500v3.500M6.500 14.500h8.500" fill="none" stroke="#2b4c5a" strokeWidth="3" /><path d="M5.500 2.500h10v8h-10z" fill="#67cbea" stroke="#fff" strokeWidth="1.400" /><path d="M10.500 10.500v3.500M6.500 14h8.500" stroke="#fff" strokeWidth="1.400" /><rect x="1.500" y="1" width="4.500" height="5" fill="#67cbea" stroke="#2b4c5a" strokeWidth="2.400" /><rect x="1.500" y="1" width="4.500" height="5" fill="none" stroke="#fff" strokeWidth="1.100" /><path d="M3.700 6.500v6h2" fill="none" stroke="#fff" strokeWidth="1.300" /></svg>
          </button>
          <button aria-label="Громкость" className="ml-[7px]">
            <svg width="18" height="17" viewBox="0 0 18 17"><path d="M1.500 5.500h3l4.500-4v14l-4.500-4h-3z" fill="#fff" stroke="#2b4c5a" /><path d="M11 4c1.500 2 1.500 3 1.500 4" stroke="#fff" strokeWidth="1.200" fill="none" /><circle cx="12" cy="11" r="5" fill="#d93a35" stroke="#f4d5d3" strokeWidth=".8" /><path d="M9.800 8.800l4.400 4.400M14.200 8.800l-4.400 4.400" stroke="#fff" strokeWidth="1.600" /></svg>
          </button>
          <button className="ml-3 text-xs">РУС</button>
          <button className="ml-[17px] text-center leading-[17px]">
            <time className="block">15:58</time>
            <time className="block">17.12.2018</time>
          </button>
        </div>
      </div>
    </div>
  );
}
